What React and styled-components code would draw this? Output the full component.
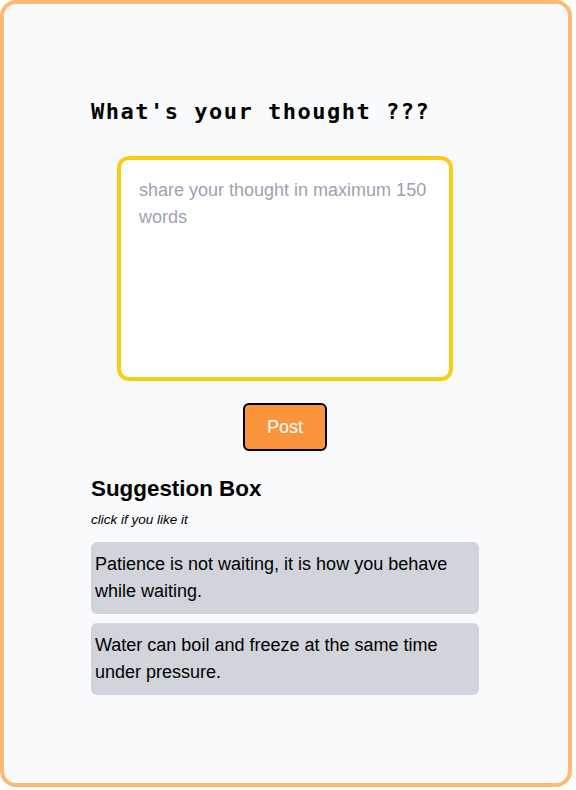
import React, { useState } from 'react';
import styled, { createGlobalStyle } from 'styled-components';

const GlobalStyle = createGlobalStyle`
  body {
    margin: 0;
    background: #ffffff;
    font-family: "Liberation Sans", Arial, sans-serif;
  }
  * {
    box-sizing: border-box;
  }
`;

const Frame = styled.div`
  width: 572px;
  height: 787px;
  border: 4px solid #fdba74;
  border-radius: 16px;
  background: #f8fafc;
  padding-top: 92px;
`;

const Column = styled.div`
  width: 388px;
  margin-left: 87px;
  display: flex;
  flex-direction: column;
`;

const Title = styled.h1`
  margin: 0;
  font-family: "DejaVu Sans Mono", "Liberation Mono", monospace;
  font-size: 22px;
  letter-spacing: 1.5px;
  line-height: 32px;
  font-weight: 700;
  color: #000;
`;

const ThoughtInput = styled.textarea`
  align-self: center;
  width: 336px;
  height: 225px;
  margin-top: 28px;
  padding: 17px 18px;
  border: 4px solid #facc15;
  border-radius: 12px;
  background: #fff;
  font-family: "Liberation Sans", Arial, sans-serif;
  font-size: 18px;
  line-height: 27px;
  color: #111;
  resize: none;
  outline: none;

  &::placeholder {
    color: #9ca3af;
  }
`;

const PostButton = styled.button`
  align-self: center;
  width: 84px;
  height: 48px;
  margin-top: 22px;
  border: 2px solid #000;
  border-radius: 6px;
  background: #fb943c;
  color: #fff;
  font-family: "Liberation Sans", Arial, sans-serif;
  font-size: 18px;
  cursor: pointer;
`;

const SectionTitle = styled.h2`
  margin: 24px 0 0;
  font-size: 22.4px;
  line-height: 28px;
  font-weight: 700;
  color: #000;
`;

const Hint = styled.p`
  margin: 8px 0 0;
  font-size: 13.5px;
  line-height: 18px;
  font-style: italic;
  color: #000;
`;

const SuggestionList = styled.div`
  margin-top: 13px;
  display: flex;
  flex-direction: column;
  gap: 9px;
`;

const Suggestion = styled.div`
  padding: 9px 4px;
  border-radius: 6px;
  background: ${p => (p.$liked ? '#fde68a' : '#d1d5db')};
  font-size: 18px;
  line-height: 27px;
  color: #000;
  cursor: pointer;
`;

const suggestions = [
  'Patience is not waiting, it is how you behave while waiting.',
  'Water can boil and freeze at the same time under pressure.',
];

export default function App() {
  const [text, setText] = useState('');
  const [liked, setLiked] = useState({});

  return (
    <>
      <GlobalStyle />
      <Frame>
        <Column>
          <Title>What's your thought ???</Title>
          <ThoughtInput
            value={text}
            onChange={e => setText(e.target.value)}
            placeholder="share your thought in maximum 150 words"
          />
          <PostButton type="button">Post</PostButton>
          <SectionTitle>Suggestion Box</SectionTitle>
          <Hint>click if you like it</Hint>
          <SuggestionList>
            {suggestions.map((s, i) => (
              <Suggestion
                key={i}
                $liked={liked[i]}
                onClick={() => setLiked({ ...liked, [i]: !liked[i] })}
              >
                {s}
              </Suggestion>
            ))}
          </SuggestionList>
        </Column>
      </Frame>
    </>
  );
}
